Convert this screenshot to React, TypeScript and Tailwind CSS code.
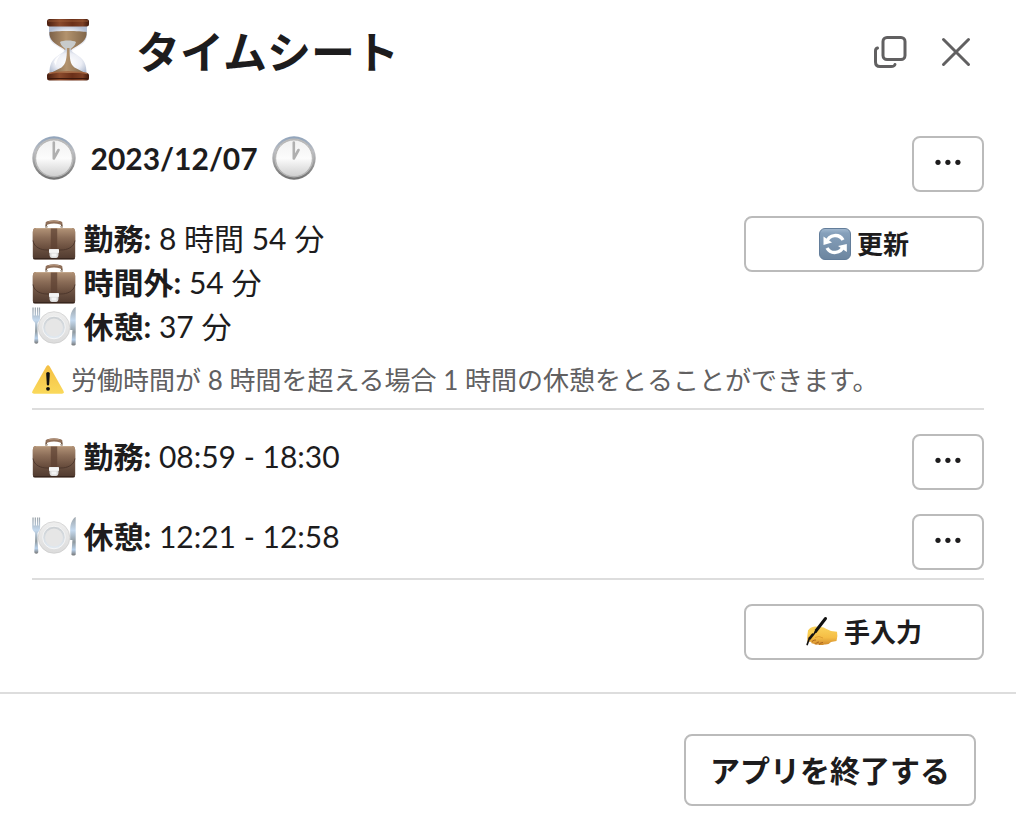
import type { ReactNode } from "react";

function Hourglass() {
  return (
    <svg viewBox="0 0 64 64" className="mb-1 h-16 w-16 shrink-0">
      <defs>
        <linearGradient id="wood" x1="0" y1="0" x2="1" y2="0">
          <stop offset="0" stopColor="#4a1f10" />
          <stop offset="0.3" stopColor="#8a4a2c" />
          <stop offset="0.6" stopColor="#6b3019" />
          <stop offset="0.85" stopColor="#7d4025" />
          <stop offset="1" stopColor="#3f190c" />
        </linearGradient>
        <linearGradient id="sand" x1="0" y1="0" x2="1" y2="0">
          <stop offset="0" stopColor="#7c6148" />
          <stop offset="0.45" stopColor="#b3936e" />
          <stop offset="1" stopColor="#80664a" />
        </linearGradient>
        <radialGradient id="glass" cx="0.5" cy="0.55" r="0.6">
          <stop offset="0" stopColor="#ffffff" />
          <stop offset="0.6" stopColor="#eceef5" />
          <stop offset="1" stopColor="#b3bed2" />
        </radialGradient>
      </defs>
      <path d="M13 8h38v8c0 9-8 12-14 16-2 1.500-3 2.500-3 3h-4c0-.500-1-1.500-3-3-6-4-14-7-14-16z" fill="url(#glass)" />
      <path d="M13.500 14c5-1.500 32-1.500 37 0 1 8-6 12-12 15.500-3 2-4.500 3-5 5h-3c-.500-2-2-3-5-5-6-3.500-13-7.500-12-15.500z" fill="url(#sand)" />
      <path d="M24 24c3-2 13-2 16 0-1 4-4 6-7 8h-2c-3-2-6-4-7-8z" fill="#c8cbcb" />
      <path d="M29.500 31h5c1 3 4 4 8 7 6 4 8 9 8 17h-37c0-8 2-13 8-17 4-3 7-4 8-7z" fill="url(#glass)" />
      <path d="M31 30h2.500c.200 11 .500 16 5 19.500 4 2.300 8 3.500 10.500 6H15c2.500-2.500 6.500-3.700 10.500-6C30 46 30.800 41 31 30z" fill="url(#sand)" />
      <path d="M18 44c1.500-4 4-6 7-7.500-3 3-4.500 6-5 11z" fill="#fff" opacity="0.9" />
      <rect x="11" y="1" width="42" height="7.500" rx="2.500" fill="url(#wood)" />
      <path d="M12 3h40" stroke="#a8663f" strokeWidth="1" opacity="0.7" />
      <rect x="11" y="55" width="42" height="7.500" rx="2.500" fill="url(#wood)" />
      <path d="M13 55.500c8-2 30-2 38 0" stroke="#a2623d" strokeWidth="1.500" fill="none" />
      <path d="M12 60.500h40" stroke="#3c180c" strokeWidth="1" />
    </svg>
  );
}

function Clock() {
  return (
    <svg viewBox="0 0 44 44" className="h-11 w-11 shrink-0">
      <defs>
        <linearGradient id="clockRim" x1="0" y1="0" x2="0" y2="1">
          <stop offset="0" stopColor="#8fa3bb" />
          <stop offset="0.35" stopColor="#bdbec2" />
          <stop offset="0.7" stopColor="#929292" />
          <stop offset="1" stopColor="#707070" />
        </linearGradient>
        <linearGradient id="clockFace" x1="0" y1="0" x2="0" y2="1">
          <stop offset="0" stopColor="#f1f1f1" />
          <stop offset="0.5" stopColor="#fcfcfc" />
          <stop offset="1" stopColor="#cfcfcf" />
        </linearGradient>
      </defs>
      <circle cx="22" cy="22" r="21.700" fill="url(#clockRim)" />
      <circle cx="22" cy="22" r="19.500" fill="#bcbcbc" />
      <circle cx="22" cy="22.300" r="18.300" fill="url(#clockFace)" stroke="#aaa" strokeWidth="0.700" />
      <path d="M21.800 6.500v16l4.700-8.500" fill="none" stroke="#b0b0b0" strokeWidth="2.600" strokeLinecap="round" strokeLinejoin="round" />
    </svg>
  );
}

function Briefcase() {
  return (
    <svg viewBox="0 0 44 44" className="h-11 w-11 shrink-0">
      <defs>
        <linearGradient id="leather" x1="0" y1="0" x2="0" y2="1">
          <stop offset="0" stopColor="#ae8d70" />
          <stop offset="0.35" stopColor="#806350" />
          <stop offset="1" stopColor="#4f392e" />
        </linearGradient>
        <linearGradient id="leatherFlap" x1="0" y1="0" x2="0" y2="1">
          <stop offset="0" stopColor="#b39478" />
          <stop offset="0.45" stopColor="#8a6c57" />
          <stop offset="1" stopColor="#634839" />
        </linearGradient>
      </defs>
      <path d="M14.200 9.500Q13.500 4.300 17.500 4h9Q30.500 4.300 29.800 9.500" fill="none" stroke="#705541" strokeWidth="1.600" />
      <path d="M15.300 5Q22 2.800 28.700 5" fill="none" stroke="#8f6f59" strokeWidth="3.400" strokeLinecap="round" />
      <path d="M17 3.600Q22 2.600 27 3.600" fill="none" stroke="#b39278" strokeWidth="1" strokeLinecap="round" />
      <path d="M13 8.800h2.800M28.200 8.800h2.800" stroke="#b2a699" strokeWidth="1.400" />
      <path d="M3.500 10h37q2.500 0 2.700 4v25q0 2.500-2.200 2.500H3Q.8 41.500.8 39V14q.2-4 2.700-4z" fill="url(#leather)" />
      <path d="M3.500 10h37q2.500 0 2.700 4v8c-1 7.500-8 10-14.200 10H15C8.800 32 1.800 29.500.8 22v-8q.2-4 2.700-4z" fill="url(#leatherFlap)" />
      <path d="M1 22.500C2 29.500 9 32 15 32h14c6 0 13-2.500 14-9.500" fill="none" stroke="#4b362b" strokeWidth="0.900" />
      <path d="M4 10.500h36" stroke="#c0a488" strokeWidth="1" />
      <path d="M18.800 10.500h6.400v20.500h-6.400z" fill="#5b3f30" opacity="0.700" />
      <path d="M1.500 40.700h41" stroke="#38261e" strokeWidth="1.200" />
      <path d="M17.500 31h9v5q0 4-2.500 4h-4q-2.500 0-2.500-4z" fill="#dadada" />
      <path d="M17 31.300h10v3.500H17z" fill="#f5f5f5" />
      <path d="M19.500 35.500h5v3h-5z" fill="#f4f4f4" />
    </svg>
  );
}

function Plate() {
  return (
    <svg viewBox="0 0 44 44" className="h-11 w-11 shrink-0">
      <defs>
        <linearGradient id="dish" x1="0" y1="0" x2="0" y2="1">
          <stop offset="0" stopColor="#eeeeee" />
          <stop offset="1" stopColor="#dcdcdc" />
        </linearGradient>
        <linearGradient id="dishWell" x1="0" y1="0" x2="0" y2="1">
          <stop offset="0" stopColor="#cbcfd2" />
          <stop offset="1" stopColor="#e2eaf2" />
        </linearGradient>
        <linearGradient id="steel" x1="0" y1="0" x2="0" y2="1">
          <stop offset="0" stopColor="#9da5ab" />
          <stop offset="0.35" stopColor="#c4d9ee" />
          <stop offset="0.65" stopColor="#8f999f" />
          <stop offset="0.85" stopColor="#b7d0ea" />
          <stop offset="1" stopColor="#777" />
        </linearGradient>
      </defs>
      <circle cx="22" cy="21.500" r="15.800" fill="url(#dish)" stroke="#c6c6c6" strokeWidth="0.600" />
      <circle cx="22" cy="21.500" r="11.300" fill="url(#dishWell)" stroke="#fafafa" strokeWidth="0.800" />
      <circle cx="22" cy="21.500" r="9" fill="#e6e6e6" />
      <path d="M.4 1.500h1.300v8h1V1.500H4v8h1V1.500h1.200v8h.7v-8h1.200v10c0 3-1.600 4-2.600 5.500v8l.8 10.500c.200 3-4.200 3-4 0l.8-10.500v-8C2 15 .2 14.500.2 11.500z" fill="url(#steel)" />
      <path d="M43.700 1v37.500c-.3 1.300-4 1.300-4.300 0l1-14.500h-2.200V13C38.300 7 41 2 43.700 1z" fill="url(#steel)" />
    </svg>
  );
}

function Warning() {
  return (
    <svg viewBox="0 0 32 32" className="h-8 w-8 shrink-0">
      <defs>
        <linearGradient id="warn" x1="0" y1="0" x2="0" y2="1">
          <stop offset="0" stopColor="#f4bf43" />
          <stop offset="1" stopColor="#fad95b" />
        </linearGradient>
      </defs>
      <path d="M14.300 2.500Q16 0 17.700 2.500L31.500 27Q32.500 29.700 30 29.700H2Q-.5 29.700.5 27z" fill="url(#warn)" />
      <path d="M14.200 9.500Q14.200 8 16 8t1.800 1.500L17.200 20.500Q17 21.500 16 21.500t-1.200-1z" fill="#111" />
      <circle cx="16" cy="24.800" r="1.900" fill="#111" />
    </svg>
  );
}

function Refresh() {
  return (
    <svg viewBox="0 0 32 32" className="h-8 w-8 shrink-0">
      <defs>
        <linearGradient id="tile" x1="0" y1="0" x2="0" y2="1">
          <stop offset="0" stopColor="#a3b9d0" />
          <stop offset="0.15" stopColor="#86a0bb" />
          <stop offset="1" stopColor="#6c859f" />
        </linearGradient>
      </defs>
      <rect x="0.500" y="0.500" width="31" height="31" rx="5.500" fill="url(#tile)" stroke="#637d9a" />
      <path d="M7.800 13.800A8.900 8.900 0 0 1 24 12" fill="none" stroke="#fff" strokeWidth="3.400" />
      <path d="M24.200 18.200A8.900 8.900 0 0 1 8 20" fill="none" stroke="#fff" strokeWidth="3.400" />
      <path d="M4.500 8.500v8.500l8.500-2.500z" fill="#fff" />
      <path d="M27.800 24v-8L19 18z" fill="#fff" />
    </svg>
  );
}

function WritingHand() {
  return (
    <svg viewBox="0 0 32 32" className="h-8 w-8 shrink-0">
      <defs>
        <linearGradient id="skin" x1="0" y1="0" x2="0" y2="1">
          <stop offset="0" stopColor="#fbd45d" />
          <stop offset="0.6" stopColor="#f5bd45" />
          <stop offset="1" stopColor="#d08a2c" />
        </linearGradient>
      </defs>
      <path d="M2 14.500Q4 11 9 10.500l6 .500q3 0 5 1.700l5 2.300 6 .800q1 4-.5 9.200l-5.500 1q-2.500 3-6.500 2.500-3.500 1-6.500 0-3 .500-4-.700-3 .200-3-2l-3.500.200Q.8 23 2 14.500z" fill="url(#skin)" />
      <path d="M6 25.500q2-2 4-1.500M9.500 28q1-2 3.500-2M13 28.500q1.500-2 4-2" fill="none" stroke="#a8601c" strokeWidth="0.900" />
      <path d="M9 21.500l4-1 4 1.500" fill="none" stroke="#d8962f" strokeWidth="0.800" />
      <path d="M19.500 2.500L9.500 15.500" stroke="#111" strokeWidth="3" strokeLinecap="round" />
      <path d="M3.500 22L1.200 28.500" stroke="#111" strokeWidth="1.700" strokeLinecap="round" />
      <path d="M10 14.500L3.300 23" stroke="#111" strokeWidth="2.800" />
      <path d="M2 15q4-2.500 7-1l-1.500 3.500q-3-1-5.500 2z" fill="#fad055" />
    </svg>
  );
}

function MoreButton() {
  return (
    <button
      aria-label="その他"
      className="flex h-14 w-18 shrink-0 items-start justify-center rounded-lg border-2 border-[#bbbbbb] pt-[21px]"
    >
      <svg viewBox="0 0 26 6" className="h-1.5 w-[26px]" fill="#1d1c1d">
        <circle cx="3" cy="3.300" r="2.600" />
        <circle cx="12.900" cy="3.300" r="2.600" />
        <circle cx="22.900" cy="3.300" r="2.600" />
      </svg>
    </button>
  );
}

function ActionButton({ icon, children }: { icon: ReactNode; children: ReactNode }) {
  return (
    <button className="flex h-14 w-60 shrink-0 items-center justify-center gap-1.5 rounded-lg border-2 border-[#bbbbbb] text-[26px] leading-9 font-bold">
      {icon}
      <span>{children}</span>
    </button>
  );
}

function Entry({ icon, label, value }: { icon: ReactNode; label: string; value: string }) {
  return (
    <div className="flex h-11">
      <div className="pt-0.5">{icon}</div>
      <p className="pl-[7.5px] whitespace-pre">
        <b className="font-bold">{label}:</b> {value}
      </p>
    </div>
  );
}

export default function App() {
  return (
    <div
      lang="ja"
      className="flex h-[836px] w-[1016px] flex-col bg-white font-[Lato,'Noto_Sans_CJK_JP',sans-serif] text-[30px] leading-11 text-[#1d1c1d]"
    >
      {/* Header */}
      <header className="flex h-[104px] items-center pr-[45px] pl-9">
        <Hourglass />
        <h1 className="flex-1 pl-9 text-[44px] leading-[60px] font-bold">タイムシート</h1>
        <button aria-label="新しいウィンドウで開く" className="mr-[34px]">
          <svg viewBox="0 0 34 34" className="h-[34px] w-[34px]" fill="none" stroke="#616061" strokeWidth="3" strokeLinecap="round">
            <rect x="10" y="2.500" width="22" height="22" rx="4" />
            <path d="M4.500 13Q2.500 13.500 2.500 16V27Q2.500 31.500 7 31.500H18Q21.500 31.500 22 29.500" />
          </svg>
        </button>
        <button aria-label="閉じる">
          <svg viewBox="0 0 30 30" className="h-[30px] w-[30px]" fill="none" stroke="#616061" strokeWidth="3" strokeLinecap="round">
            <path d="M2.500 2.500l25 25M27.500 2.500l-25 25" />
          </svg>
        </button>
      </header>

      <main className="flex flex-1 flex-col px-8 pt-8">
        {/* Date */}
        <div className="flex justify-between">
          <div className="flex h-11 gap-[14.5px]">
            <Clock />
            <b className="font-bold">2023/12/07</b>
            <Clock />
          </div>
          <MoreButton />
        </div>

        {/* Summary */}
        <div className="mt-6 flex justify-between">
          <div>
            <Entry icon={<Briefcase />} label="勤務" value="8 時間 54 分" />
            <Entry icon={<Briefcase />} label="時間外" value="54 分" />
            <Entry icon={<Plate />} label="休憩" value="37 分" />
          </div>
          <ActionButton icon={<Refresh />}>更新</ActionButton>
        </div>
        <div className="mt-3.5 flex h-[46px] gap-[7px] text-[26px] leading-9 text-[#616061]">
          <div className="pt-0.5">
            <Warning />
          </div>
          <p className="whitespace-nowrap">労働時間が 8 時間を超える場合 1 時間の休憩をとることができます。</p>
        </div>

        {/* Records */}
        <div className="flex flex-col gap-6 border-y-2 border-[#dddddd] pt-6 pb-2">
          <div className="flex justify-between">
            <Entry icon={<Briefcase />} label="勤務" value="08:59 - 18:30" />
            <MoreButton />
          </div>
          <div className="flex justify-between">
            <Entry icon={<Plate />} label="休憩" value="12:21 - 12:58" />
            <MoreButton />
          </div>
        </div>

        <div className="mt-6 flex justify-end">
          <ActionButton icon={<WritingHand />}>手入力</ActionButton>
        </div>
      </main>

      {/* Footer */}
      <footer className="flex h-36 justify-end border-t-2 border-[#dddddd] pt-10 pr-10">
        <button className="flex h-18 w-[292px] items-center justify-center rounded-lg border-2 border-[#bbbbbb] font-bold">
          アプリを終了する
        </button>
      </footer>
    </div>
  );
}
